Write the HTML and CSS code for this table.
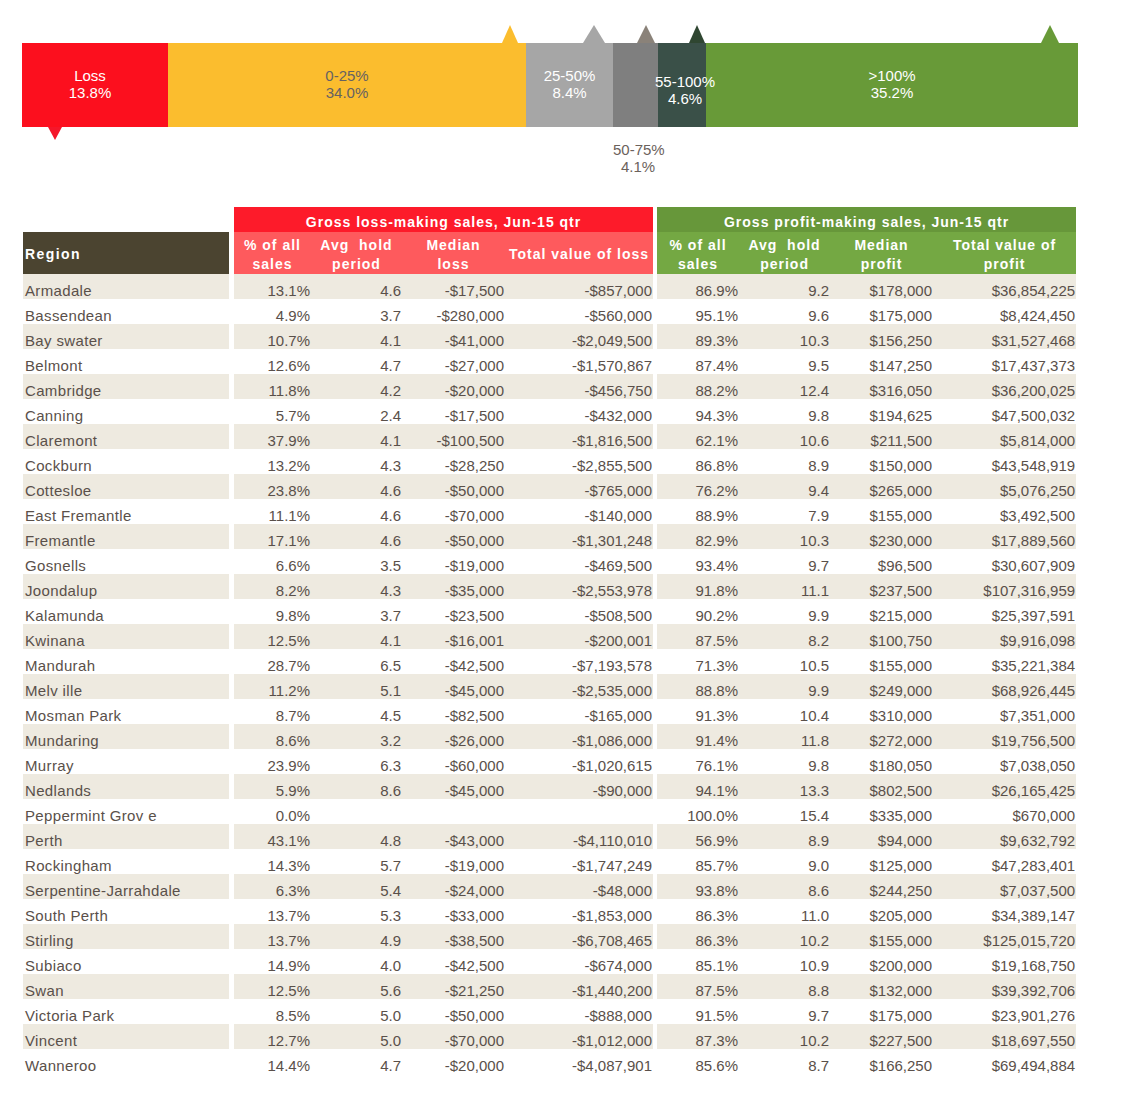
FILE: index.html
```html
<!DOCTYPE html>
<html lang="en">
<head>
<meta charset="utf-8">
<title>Gross loss and profit-making sales, Jun-15 qtr</title>
<link rel="stylesheet" href="styles.css">
</head>
<body>
<div class="chart">
  <svg class="markers" width="1138" height="180" viewBox="0 0 1138 180" aria-hidden="true">
    <polygon points="48,127 62,127 55,140" fill="#f5162a"/>
    <polygon points="502,43 518,43 510,25" fill="#fbbd2e"/>
    <polygon points="583,43 605,43 594,25" fill="#a6a6a6"/>
    <polygon points="637,43 655,43 646,25" fill="#8a8279"/>
    <polygon points="689,43 705,43 697,25" fill="#2f4631"/>
    <polygon points="1041,43 1059,43 1050,25" fill="#689a38"/>
  </svg>
  <div class="bar">
    <div class="seg seg-loss"><span>Loss<br>13.8%</span></div>
    <div class="seg seg-q1"><span>0-25%<br>34.0%</span></div>
    <div class="seg seg-q2"><span>25-50%<br>8.4%</span></div>
    <div class="seg seg-q3"></div>
    <div class="seg seg-q4"><span class="shifted">55-100%<br>4.6%</span></div>
    <div class="seg seg-q5"><span>&gt;100%<br>35.2%</span></div>
  </div>
  <div class="below">
    <div class="below-spacer"></div>
    <div class="below-label">50-75%<br>4.1%</div>
  </div>
</div>

<table class="sales">
  <colgroup>
    <col class="c-region">
    <col class="c-pct">
    <col class="c-hold">
    <col class="c-med">
    <col class="c-tot">
    <col class="c-pct2">
    <col class="c-hold">
    <col class="c-med">
    <col class="c-tot2">
  </colgroup>
  <thead>
    <tr class="group-row">
      <th class="blank"></th>
      <th class="grp loss-grp gap5" colspan="4">Gross loss-making sales, Jun-15 qtr</th>
      <th class="grp profit-grp gap4" colspan="4">Gross profit-making sales, Jun-15 qtr</th>
    </tr>
    <tr class="sub-row">
      <th class="region-h">Region</th>
      <th class="sub loss-sub gap5">% of all<br>sales</th>
      <th class="sub loss-sub">Avg&nbsp; hold<br>period</th>
      <th class="sub loss-sub">Median<br>loss</th>
      <th class="sub loss-sub">Total value of loss</th>
      <th class="sub profit-sub gap4">% of all<br>sales</th>
      <th class="sub profit-sub">Avg&nbsp; hold<br>period</th>
      <th class="sub profit-sub">Median<br>profit</th>
      <th class="sub profit-sub">Total value of<br>profit</th>
    </tr>
  </thead>
  <tbody>
    <tr class="shade"><td>Armadale</td><td class="gap5">13.1%</td><td>4.6</td><td>-$17,500</td><td>-$857,000</td><td class="gap4">86.9%</td><td>9.2</td><td>$178,000</td><td>$36,854,225</td></tr>
    <tr><td>Bassendean</td><td class="gap5">4.9%</td><td>3.7</td><td>-$280,000</td><td>-$560,000</td><td class="gap4">95.1%</td><td>9.6</td><td>$175,000</td><td>$8,424,450</td></tr>
    <tr class="shade"><td>Bay swater</td><td class="gap5">10.7%</td><td>4.1</td><td>-$41,000</td><td>-$2,049,500</td><td class="gap4">89.3%</td><td>10.3</td><td>$156,250</td><td>$31,527,468</td></tr>
    <tr><td>Belmont</td><td class="gap5">12.6%</td><td>4.7</td><td>-$27,000</td><td>-$1,570,867</td><td class="gap4">87.4%</td><td>9.5</td><td>$147,250</td><td>$17,437,373</td></tr>
    <tr class="shade"><td>Cambridge</td><td class="gap5">11.8%</td><td>4.2</td><td>-$20,000</td><td>-$456,750</td><td class="gap4">88.2%</td><td>12.4</td><td>$316,050</td><td>$36,200,025</td></tr>
    <tr><td>Canning</td><td class="gap5">5.7%</td><td>2.4</td><td>-$17,500</td><td>-$432,000</td><td class="gap4">94.3%</td><td>9.8</td><td>$194,625</td><td>$47,500,032</td></tr>
    <tr class="shade"><td>Claremont</td><td class="gap5">37.9%</td><td>4.1</td><td>-$100,500</td><td>-$1,816,500</td><td class="gap4">62.1%</td><td>10.6</td><td>$211,500</td><td>$5,814,000</td></tr>
    <tr><td>Cockburn</td><td class="gap5">13.2%</td><td>4.3</td><td>-$28,250</td><td>-$2,855,500</td><td class="gap4">86.8%</td><td>8.9</td><td>$150,000</td><td>$43,548,919</td></tr>
    <tr class="shade"><td>Cottesloe</td><td class="gap5">23.8%</td><td>4.6</td><td>-$50,000</td><td>-$765,000</td><td class="gap4">76.2%</td><td>9.4</td><td>$265,000</td><td>$5,076,250</td></tr>
    <tr><td>East Fremantle</td><td class="gap5">11.1%</td><td>4.6</td><td>-$70,000</td><td>-$140,000</td><td class="gap4">88.9%</td><td>7.9</td><td>$155,000</td><td>$3,492,500</td></tr>
    <tr class="shade"><td>Fremantle</td><td class="gap5">17.1%</td><td>4.6</td><td>-$50,000</td><td>-$1,301,248</td><td class="gap4">82.9%</td><td>10.3</td><td>$230,000</td><td>$17,889,560</td></tr>
    <tr><td>Gosnells</td><td class="gap5">6.6%</td><td>3.5</td><td>-$19,000</td><td>-$469,500</td><td class="gap4">93.4%</td><td>9.7</td><td>$96,500</td><td>$30,607,909</td></tr>
    <tr class="shade"><td>Joondalup</td><td class="gap5">8.2%</td><td>4.3</td><td>-$35,000</td><td>-$2,553,978</td><td class="gap4">91.8%</td><td>11.1</td><td>$237,500</td><td>$107,316,959</td></tr>
    <tr><td>Kalamunda</td><td class="gap5">9.8%</td><td>3.7</td><td>-$23,500</td><td>-$508,500</td><td class="gap4">90.2%</td><td>9.9</td><td>$215,000</td><td>$25,397,591</td></tr>
    <tr class="shade"><td>Kwinana</td><td class="gap5">12.5%</td><td>4.1</td><td>-$16,001</td><td>-$200,001</td><td class="gap4">87.5%</td><td>8.2</td><td>$100,750</td><td>$9,916,098</td></tr>
    <tr><td>Mandurah</td><td class="gap5">28.7%</td><td>6.5</td><td>-$42,500</td><td>-$7,193,578</td><td class="gap4">71.3%</td><td>10.5</td><td>$155,000</td><td>$35,221,384</td></tr>
    <tr class="shade"><td>Melv ille</td><td class="gap5">11.2%</td><td>5.1</td><td>-$45,000</td><td>-$2,535,000</td><td class="gap4">88.8%</td><td>9.9</td><td>$249,000</td><td>$68,926,445</td></tr>
    <tr><td>Mosman Park</td><td class="gap5">8.7%</td><td>4.5</td><td>-$82,500</td><td>-$165,000</td><td class="gap4">91.3%</td><td>10.4</td><td>$310,000</td><td>$7,351,000</td></tr>
    <tr class="shade"><td>Mundaring</td><td class="gap5">8.6%</td><td>3.2</td><td>-$26,000</td><td>-$1,086,000</td><td class="gap4">91.4%</td><td>11.8</td><td>$272,000</td><td>$19,756,500</td></tr>
    <tr><td>Murray</td><td class="gap5">23.9%</td><td>6.3</td><td>-$60,000</td><td>-$1,020,615</td><td class="gap4">76.1%</td><td>9.8</td><td>$180,050</td><td>$7,038,050</td></tr>
    <tr class="shade"><td>Nedlands</td><td class="gap5">5.9%</td><td>8.6</td><td>-$45,000</td><td>-$90,000</td><td class="gap4">94.1%</td><td>13.3</td><td>$802,500</td><td>$26,165,425</td></tr>
    <tr><td>Peppermint Grov e</td><td class="gap5">0.0%</td><td></td><td></td><td></td><td class="gap4">100.0%</td><td>15.4</td><td>$335,000</td><td>$670,000</td></tr>
    <tr class="shade"><td>Perth</td><td class="gap5">43.1%</td><td>4.8</td><td>-$43,000</td><td>-$4,110,010</td><td class="gap4">56.9%</td><td>8.9</td><td>$94,000</td><td>$9,632,792</td></tr>
    <tr><td>Rockingham</td><td class="gap5">14.3%</td><td>5.7</td><td>-$19,000</td><td>-$1,747,249</td><td class="gap4">85.7%</td><td>9.0</td><td>$125,000</td><td>$47,283,401</td></tr>
    <tr class="shade"><td>Serpentine-Jarrahdale</td><td class="gap5">6.3%</td><td>5.4</td><td>-$24,000</td><td>-$48,000</td><td class="gap4">93.8%</td><td>8.6</td><td>$244,250</td><td>$7,037,500</td></tr>
    <tr><td>South Perth</td><td class="gap5">13.7%</td><td>5.3</td><td>-$33,000</td><td>-$1,853,000</td><td class="gap4">86.3%</td><td>11.0</td><td>$205,000</td><td>$34,389,147</td></tr>
    <tr class="shade"><td>Stirling</td><td class="gap5">13.7%</td><td>4.9</td><td>-$38,500</td><td>-$6,708,465</td><td class="gap4">86.3%</td><td>10.2</td><td>$155,000</td><td>$125,015,720</td></tr>
    <tr><td>Subiaco</td><td class="gap5">14.9%</td><td>4.0</td><td>-$42,500</td><td>-$674,000</td><td class="gap4">85.1%</td><td>10.9</td><td>$200,000</td><td>$19,168,750</td></tr>
    <tr class="shade"><td>Swan</td><td class="gap5">12.5%</td><td>5.6</td><td>-$21,250</td><td>-$1,440,200</td><td class="gap4">87.5%</td><td>8.8</td><td>$132,000</td><td>$39,392,706</td></tr>
    <tr><td>Victoria Park</td><td class="gap5">8.5%</td><td>5.0</td><td>-$50,000</td><td>-$888,000</td><td class="gap4">91.5%</td><td>9.7</td><td>$175,000</td><td>$23,901,276</td></tr>
    <tr class="shade"><td>Vincent</td><td class="gap5">12.7%</td><td>5.0</td><td>-$70,000</td><td>-$1,012,000</td><td class="gap4">87.3%</td><td>10.2</td><td>$227,500</td><td>$18,697,550</td></tr>
    <tr><td>Wanneroo</td><td class="gap5">14.4%</td><td>4.7</td><td>-$20,000</td><td>-$4,087,901</td><td class="gap4">85.6%</td><td>8.7</td><td>$166,250</td><td>$69,494,884</td></tr>
  </tbody>
</table>
</body>
</html>
```

FILE: styles.css
```css
* { box-sizing: border-box; }

body {
  margin: 0;
  background: #ffffff;
  font-family: "Liberation Sans", Arial, sans-serif;
  color: #5a504a;
}

/* ---------- distribution bar ---------- */
.chart {
  position: relative;
  padding: 43px 0 0 22px;
}

.markers {
  position: absolute;
  left: 0;
  top: 0;
  pointer-events: none;
}

.bar {
  display: flex;
  width: 1056px;
  height: 84px;
}

.seg {
  display: flex;
  align-items: center;
  justify-content: center;
  text-align: center;
  font-size: 15px;
  line-height: 17px;
  padding-bottom: 3px;
  color: #ffffff;
  white-space: nowrap;
}

.seg-loss { width: 146px; background: #fc0f1e; padding-right: 10px; }
.seg-q1   { width: 358px; background: #fbbd2e; color: #666262; }
.seg-q2   { width: 87px;  background: #a6a6a6; }
.seg-q3   { width: 45px;  background: #7f7f7f; }
.seg-q4   { width: 48px;  background: #3a5048; }
.seg-q5   { width: 372px; background: #689a38; }

.shifted {
  position: relative;
  z-index: 1;
  padding-top: 12px;
  padding-left: 6px;
}

.below {
  display: flex;
  margin-top: 14px;
  font-size: 15px;
  line-height: 17px;
  color: #6b625c;
}

.below-spacer { width: 591px; }
.below-label {
  width: 50px;
  text-align: center;
  white-space: nowrap;
}

/* ---------- table ---------- */
.sales {
  margin: 32px 0 0 23px;
  width: 1053px;
  table-layout: fixed;
  border-collapse: separate;
  border-spacing: 0;
}

.c-region { width: 206px; }
.c-pct    { width: 82px; }
.c-hold   { width: 91px; }
.c-med    { width: 103px; }
.c-tot    { width: 148px; }
.c-pct2   { width: 86px; }
.c-tot2   { width: 143px; }

.sales th {
  font-size: 14px;
  font-weight: bold;
  letter-spacing: 1px;
  color: #ffffff;
  padding: 0;
  white-space: nowrap;
}

.gap5 { border-left: 5px solid #ffffff; }
.gap4 { border-left: 4px solid #ffffff; }

.group-row th {
  height: 25px;
  line-height: 16px;
  vertical-align: bottom;
  padding-bottom: 2px;
  text-align: center;
}

.group-row .blank { background: transparent; }
.loss-grp   { background: #fd1b2a; }
.profit-grp { background: #67973a; }

.sub-row th {
  height: 42px;
  line-height: 19px;
  vertical-align: middle;
  padding-top: 3px;
  text-align: center;
}

.sales th.region-h {
  background: #4b4430;
  text-align: left;
  padding-left: 2px;
  letter-spacing: 1.4px;
}

.loss-sub   { background: #fe5a5d; }
.profit-sub { background: #74a843; }

.sales td {
  height: 25px;
  padding: 0 1px 1px 0;
  font-size: 15px;
  line-height: 15px;
  vertical-align: bottom;
  text-align: right;
  white-space: nowrap;
  color: #5a504a;
}

.sales td:first-child {
  text-align: left;
  padding: 0 0 1px 2px;
  letter-spacing: 0.35px;
}

.shade td { background: #eeeae0; }
```
